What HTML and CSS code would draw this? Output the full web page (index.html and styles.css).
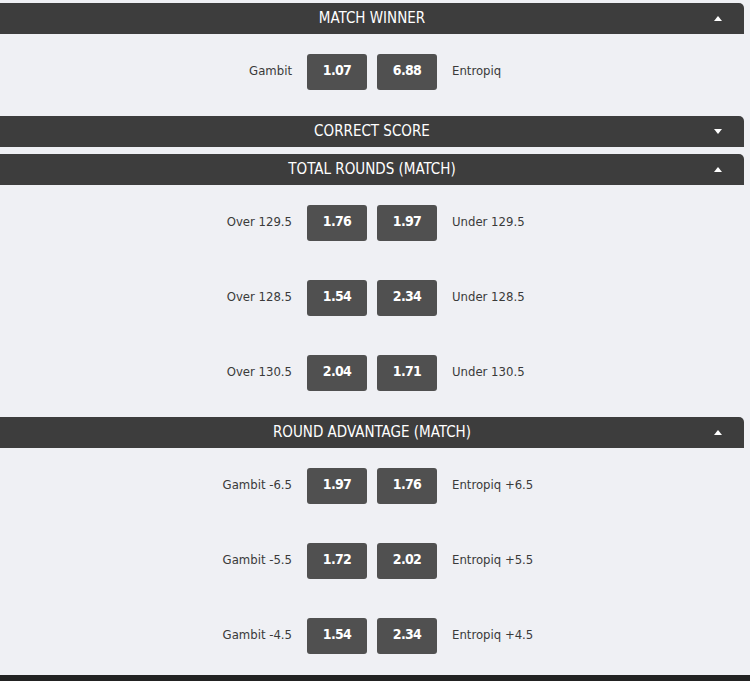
FILE: index.html
```html
<!DOCTYPE html>
<html lang="en">
<head>
  <meta charset="UTF-8" />
  <title>Markets</title>
  <link rel="stylesheet" href="styles.css">
</head>
<body>
  <div class="markets">

    <!-- Match winner -->
    <div class="market">
      <div class="market-head">MATCH WINNER <span class="caret up"></span></div>
      <div class="market-body">
        <div class="row">
          <span class="lbl left">Gambit</span>
          <button class="odd">1.07</button>
          <button class="odd">6.88</button>
          <span class="lbl right">Entropiq</span>
        </div>
      </div>
    </div>

    <!-- Correct score (collapsed) -->
    <div class="market">
      <div class="market-head">CORRECT SCORE <span class="caret down"></span></div>
    </div>

    <!-- Total rounds -->
    <div class="market">
      <div class="market-head">TOTAL ROUNDS (MATCH) <span class="caret up"></span></div>
      <div class="market-body">
        <div class="row">
          <span class="lbl left">Over 129.5</span>
          <button class="odd">1.76</button>
          <button class="odd">1.97</button>
          <span class="lbl right">Under 129.5</span>
        </div>
        <div class="row">
          <span class="lbl left">Over 128.5</span>
          <button class="odd">1.54</button>
          <button class="odd">2.34</button>
          <span class="lbl right">Under 128.5</span>
        </div>
        <div class="row">
          <span class="lbl left">Over 130.5</span>
          <button class="odd">2.04</button>
          <button class="odd">1.71</button>
          <span class="lbl right">Under 130.5</span>
        </div>
      </div>
    </div>

    <!-- Round advantage -->
    <div class="market">
      <div class="market-head">ROUND ADVANTAGE (MATCH) <span class="caret up"></span></div>
      <div class="market-body">
        <div class="row">
          <span class="lbl left">Gambit -6.5</span>
          <button class="odd">1.97</button>
          <button class="odd">1.76</button>
          <span class="lbl right">Entropiq +6.5</span>
        </div>
        <div class="row">
          <span class="lbl left">Gambit -5.5</span>
          <button class="odd">1.72</button>
          <button class="odd">2.02</button>
          <span class="lbl right">Entropiq +5.5</span>
        </div>
        <div class="row">
          <span class="lbl left">Gambit -4.5</span>
          <button class="odd">1.54</button>
          <button class="odd">2.34</button>
          <span class="lbl right">Entropiq +4.5</span>
        </div>
      </div>
    </div>

  </div>
  <div class="footer-bar"></div>
</body>
</html>
```

FILE: styles.css
```css
* {
  margin: 0;
  padding: 0;
  box-sizing: border-box;
}

body {
  background: #eff0f4;
  font-family: "DejaVu Sans Condensed", "Roboto", sans-serif;
  color: #3a3a3a;
  overflow: hidden;
}

.markets {
  width: 744px;
  padding-top: 3px;
}

.market {
  margin-bottom: 7px;
}

.market-head {
  position: relative;
  height: 31px;
  line-height: 30px;
  background: #3d3d3d;
  color: #fff;
  text-align: center;
  font-size: 15px;
  border-top-right-radius: 5px;
}

.caret {
  position: absolute;
  right: 22px;
  top: 13px;
  width: 0;
  height: 0;
  border-left: 4.5px solid transparent;
  border-right: 4.5px solid transparent;
}

.caret.up {
  border-bottom: 5px solid #fff;
}

.caret.down {
  top: 13px;
  border-top: 5px solid #fff;
}

.row {
  display: grid;
  grid-template-columns: 1fr 60px 60px 1fr;
  column-gap: 10px;
  align-items: center;
  padding: 20px 0 19px;
}

.lbl {
  font-size: 13px;
  color: #3a3a3a;
  margin-top: -3px;
}

.lbl.left {
  text-align: right;
  padding-right: 5px;
}

.lbl.right {
  text-align: left;
  padding-left: 5px;
}

.odd {
  height: 36px;
  border: none;
  border-radius: 3px;
  background: #505050;
  color: #fff;
  font-family: inherit;
  font-weight: bold;
  font-size: 14px;
  letter-spacing: -0.7px;
  padding-bottom: 5px;
  cursor: pointer;
}

.footer-bar {
  position: fixed;
  left: 0;
  right: 0;
  top: 675px;
  height: 6px;
  background: #222;
}
```
